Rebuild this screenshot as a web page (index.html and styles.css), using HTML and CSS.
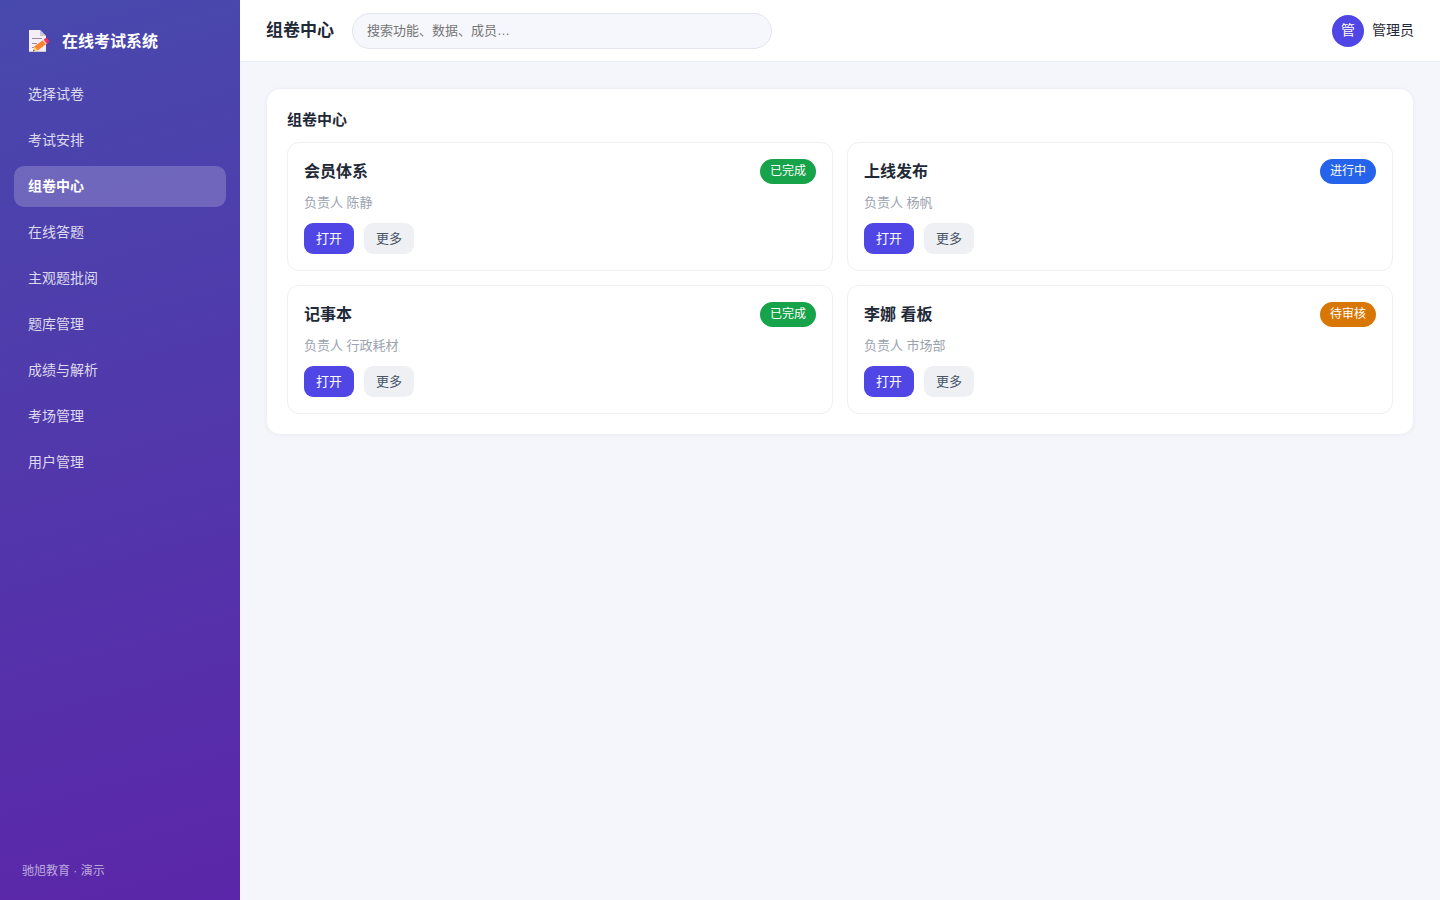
FILE: index.html
```html
<!DOCTYPE html>
<html lang="zh-CN">
<head>
<meta charset="utf-8">
<meta name="viewport" content="width=device-width, initial-scale=1">
<title>在线考试系统</title>
<link rel="stylesheet" href="styles.css">
</head>
<body>
<div class="app">
  <aside class="sidebar">
    <div class="brand">
      <svg class="brand-icon" viewBox="0 0 22 24" aria-hidden="true">
        <path d="M1 1h11l6 6v16H1z" fill="#f3eef8"/>
        <path d="M12 1l6 6h-6z" fill="#cdc4d6"/>
        <path d="M1 22h17v1H1z" fill="#cdc4d6"/>
        <path d="M4 9.500h10M4 14.500h5M4 18.500h3" stroke="#998ea4" fill="none"/>
        <path d="M5 22.500l1.200-5 3.500 4z" fill="#ffce7c"/>
        <path d="M5 22.500l.5-2 1.300 1.300z" fill="#50404d"/>
        <path d="M6.200 17.500l9-6.500 3 4-8.500 6.500z" fill="#ff822d"/>
        <path d="M14.700 11.400l1.300-1 3.200 4-1.400 1.100z" fill="#d3d3d3"/>
        <path d="M15.700 10.600l2-1.500q.9-.5 1.500.3l1.900 2.500q.5.900-.3 1.500l-1.900 1.400z" fill="#f92f60"/>
      </svg>
      <span>在线考试系统</span>
    </div>
    <nav class="nav">
      <a class="nav-link" href="#">选择试卷</a>
      <a class="nav-link" href="#">考试安排</a>
      <a class="nav-link active" href="#" aria-current="page">组卷中心</a>
      <a class="nav-link" href="#">在线答题</a>
      <a class="nav-link" href="#">主观题批阅</a>
      <a class="nav-link" href="#">题库管理</a>
      <a class="nav-link" href="#">成绩与解析</a>
      <a class="nav-link" href="#">考场管理</a>
      <a class="nav-link" href="#">用户管理</a>
    </nav>
    <div class="sidebar-foot">驰旭教育 · 演示</div>
  </aside>
  <div class="main">
    <header class="topbar">
      <h1 class="page-title">组卷中心</h1>
      <input class="search" type="search" placeholder="搜索功能、数据、成员…" aria-label="搜索">
      <div class="user"><span class="avatar">管</span><span>管理员</span></div>
    </header>
    <main class="content">
      <section class="panel">
        <h2 class="panel-title">组卷中心</h2>
        <div class="grid">
          <article class="card">
            <div class="card-head"><h3 class="card-title">会员体系</h3><span class="badge green">已完成</span></div>
            <p class="owner">负责人 陈静</p>
            <div class="actions"><button class="btn primary" type="button">打开</button><button class="btn" type="button">更多</button></div>
          </article>
          <article class="card">
            <div class="card-head"><h3 class="card-title">上线发布</h3><span class="badge blue">进行中</span></div>
            <p class="owner">负责人 杨帆</p>
            <div class="actions"><button class="btn primary" type="button">打开</button><button class="btn" type="button">更多</button></div>
          </article>
          <article class="card">
            <div class="card-head"><h3 class="card-title">记事本</h3><span class="badge green">已完成</span></div>
            <p class="owner">负责人 行政耗材</p>
            <div class="actions"><button class="btn primary" type="button">打开</button><button class="btn" type="button">更多</button></div>
          </article>
          <article class="card">
            <div class="card-head"><h3 class="card-title">李娜 看板</h3><span class="badge amber">待审核</span></div>
            <p class="owner">负责人 市场部</p>
            <div class="actions"><button class="btn primary" type="button">打开</button><button class="btn" type="button">更多</button></div>
          </article>
        </div>
      </section>
    </main>
  </div>
</div>
</body>
</html>
```
FILE: styles.css
```css
* { box-sizing: border-box; }
body {
  margin: 0;
  font: 14px/21px "Liberation Sans", "Noto Sans CJK SC", sans-serif;
  color: #1f2937;
  background: #f5f6fb;
}
h1, h2, h3, p { margin: 0; }
button, input { font: inherit; }
.app { display: flex; min-height: 100vh; }
.sidebar {
  flex: 0 0 240px;
  display: flex;
  flex-direction: column;
  padding: 24px 14px 18px;
  color: #fff;
  background: linear-gradient(165deg, #4849ad, #5b26a9);
}
.brand {
  display: flex;
  align-items: center;
  gap: 12px;
  height: 34px;
  padding: 0 14px;
  margin-bottom: 16px;
  font-size: 16px;
  font-weight: 700;
}
.brand-icon { width: 22px; height: 24px; }
.nav { display: flex; flex-direction: column; gap: 5px; }
.nav-link {
  padding: 10px 14px;
  border-radius: 10px;
  color: rgba(255, 255, 255, .82);
  text-decoration: none;
}
.nav-link.active { color: #fff; font-weight: 700; background: rgba(255, 255, 255, .2); }
.sidebar-foot { margin-top: auto; padding: 0 8px; font-size: 12px; color: rgba(255, 255, 255, .6); }
.main { flex: 1; min-width: 0; }
.topbar {
  display: flex;
  align-items: center;
  gap: 18px;
  height: 62px;
  padding: 0 26px;
  background: #fff;
  border-bottom: 1px solid #eceef3;
}
.page-title { font-size: 17px; }
.search {
  width: 420px;
  height: 36px;
  padding: 0 14px;
  font-size: 13px;
  border: 1px solid #e2e5ee;
  border-radius: 18px;
  background: #f6f7fc;
  outline: none;
}
.search::placeholder { color: #757575; }
.user { display: flex; align-items: center; gap: 8px; margin-left: auto; }
.avatar {
  display: grid;
  place-items: center;
  width: 32px;
  height: 32px;
  border-radius: 50%;
  color: #fff;
  background: #4f46e5;
}
.content { padding: 26px; }
.panel {
  padding: 20px;
  border: 1px solid #eef0f5;
  border-radius: 14px;
  background: #fff;
  box-shadow: 0 1px 4px rgba(30, 40, 90, .04);
}
.panel-title { margin-bottom: 12px; font-size: 15px; }
.grid { display: grid; grid-template-columns: 1fr 1fr; gap: 14px; }
.card { padding: 16px; border: 1px solid #eef0f3; border-radius: 12px; }
.card-head { display: flex; align-items: center; justify-content: space-between; height: 25px; }
.card-title { font-size: 16px; }
.badge { padding: 2px 10px; border-radius: 13px; font-size: 12px; color: #fff; }
.green { background: #16a34a; }
.blue { background: #2563eb; }
.amber { background: #d97706; }
.owner { margin: 8px 0 10px; font-size: 13px; color: #9ca3af; }
.actions { display: flex; gap: 10px; }
.btn {
  padding: 5px 12px;
  border: 0;
  border-radius: 9px;
  font-size: 13px;
  color: #475569;
  background: #eef0f4;
}
.btn.primary { color: #fff; background: #4f46e5; }
```
